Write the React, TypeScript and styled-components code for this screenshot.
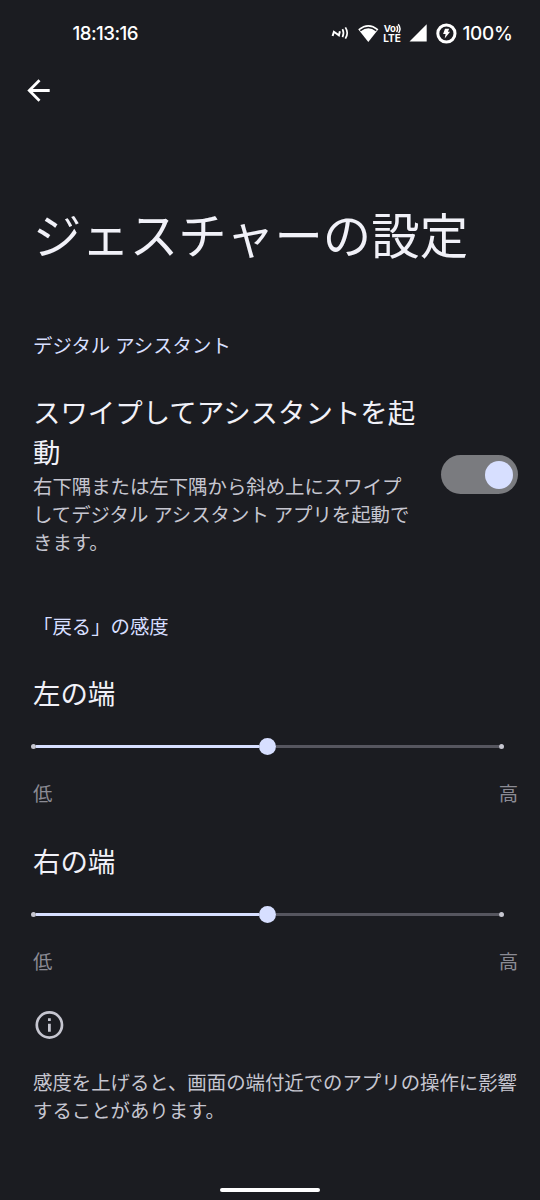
import React from "react";
import styled, { createGlobalStyle } from "styled-components";

const Global = createGlobalStyle`
  html, body { margin: 0; padding: 0; background: #1b1c21; }
  *, *::before, *::after { box-sizing: border-box; }
`;

const Screen = styled.main`
  width: 540px;
  height: 1200px;
  display: flex;
  flex-direction: column;
  background: #1b1c21;
  color: #f1f1f8;
  font-family: "Noto Sans CJK JP", sans-serif;
  overflow: hidden;
`;

const StatusBar = styled.header`
  display: flex;
  align-items: center;
  justify-content: space-between;
  height: 66px;
  padding: 0 27px 0 72.5px;
  color: #fff;
  font-family: Inter, sans-serif;
  font-weight: 500;
  font-size: 19px;
`;

const Clock = styled.time`
  font-size: 18.7px;
  letter-spacing: -0.55px;
`;

const StatusIcons = styled.div`
  display: flex;
  align-items: center;
  svg { display: block; }
`;

const Percent = styled.span`
  width: 50.5px;
  margin-left: 5.5px;
  white-space: nowrap;
  letter-spacing: -0.3px;
`;

const BackButton = styled.button`
  display: flex;
  width: 30px;
  height: 30px;
  margin: 9px 0 0 22.5px;
  padding: 0;
  border: 0;
  background: none;
  color: #fff;
`;

const Title = styled.h1`
  margin: 93px 0 0 33px;
  font-size: 48.4px;
  font-weight: 400;
  line-height: 70px;
  white-space: nowrap;
`;

const SectionTitle = styled.h2<{ $gap: number }>`
  margin: ${(p) => p.$gap}px 0 0 33px;
  font-size: 19.4px;
  font-weight: 400;
  line-height: 28px;
  word-spacing: 0.7px;
  color: #d7dfff;
`;

const Preference = styled.section`
  display: flex;
  align-items: center;
  justify-content: space-between;
  margin-top: 32px;
  padding: 0 22px 0 33px;
`;

const PreferenceText = styled.div`
  width: 386px;
`;

const Label = styled.h3`
  margin: 0;
  font-size: 27.45px;
  font-weight: 400;
  line-height: 40px;
  white-space: nowrap;
`;

const Summary = styled.p`
  margin: 1px 0 0;
  font-size: 19.4px;
  line-height: 28px;
  word-spacing: 0.5px;
  color: #c6c6d0;
  white-space: nowrap;
`;

const Switch = styled.button`
  display: flex;
  align-items: center;
  justify-content: flex-end;
  width: 77px;
  height: 39px;
  margin-top: 2px;
  padding: 0 5px;
  border: 0;
  border-radius: 20px;
  background: #7a7b7f;
`;

const SwitchThumb = styled.span`
  width: 28px;
  height: 28px;
  border-radius: 50%;
  background: #d7dfff;
`;

const SliderGroup = styled.section<{ $gap: number }>`
  height: 134px;
  margin-top: ${(p) => p.$gap}px;
  padding: 0 22px 0 33px;
`;

const Slider = styled.div`
  display: flex;
  align-items: center;
  width: 473px;
  height: 17px;
  margin: 26px 0 24px -2.5px;
`;

const Tick = styled.span`
  width: 5px;
  height: 5px;
  border-radius: 50%;
  background: #c6c6d0;
`;

const Track = styled.span<{ $active?: boolean }>`
  flex: 1;
  height: 3px;
  background: ${(p) => (p.$active ? "#d7dfff" : "#56565f")};
`;

const Thumb = styled.span`
  width: 17px;
  height: 17px;
  border-radius: 50%;
  background: #d7dfff;
`;

const Range = styled.div`
  display: flex;
  justify-content: space-between;
  font-size: 19.36px;
  line-height: 28px;
  color: #8b8b94;
`;

const Footer = styled.footer`
  display: flex;
  flex-direction: column;
  margin-top: 35px;
  padding: 0 22px 0 33px;
  svg { display: block; }
`;

const FooterText = styled.p`
  margin: 27px 0 0;
  font-size: 19.4px;
  line-height: 28px;
  color: #c6c6d0;
  white-space: nowrap;
`;

const HomeBar = styled.div`
  width: 100px;
  height: 4px;
  margin: auto auto 8px;
  border-radius: 2px;
  background: #fff;
`;

const StatusGlyphs = () => (
  <svg width="126" height="26" viewBox="331 20 126 26" fill="none">
    <path d="M332.600 36l1.300-4.200 5 3.600 1-4.200" stroke="#fff" strokeWidth="2" />
    <path d="M342.500 29.200q2 4 0 8M345.400 27.400q3.600 5.600 0 11.200" stroke="#fff" strokeWidth="1.700" />
    <path d="M358.200 29.200q10.200-8.600 20.200 0L368.300 42z" fill="#fff" />
    <path d="M360.300 30.700q8-6.200 16 0" stroke="#1b1c21" strokeWidth="1.500" />
    <g fill="#fff" fontFamily="Inter, sans-serif" fontWeight="700">
      <text x="383.800" y="32.200" fontSize="9.600" textLength="12">Vo</text>
      <text x="383.300" y="41.900" fontSize="10.800" textLength="17.500" lengthAdjust="spacingAndGlyphs">LTE</text>
    </g>
    <path d="M396.800 25.800q1.800 3.200-.2 6.400M398.200 24.200q3.400 4.400.4 8.800" stroke="#fff" strokeWidth="1.400" />
    <path d="M426.700 24.300v17.200h-17.200z" fill="#fff" />
    <circle cx="446.400" cy="33.500" r="8.600" stroke="#fff" strokeWidth="3" />
    <path d="M445 28.800h4.200l-1.300 3h2.200l-5.400 6.600.9-4.300h-2.500z" fill="#fff" />
  </svg>
);

const BackArrow = () => (
  <svg width="30" height="30" viewBox="0 0 30 30" fill="none" stroke="currentColor" strokeWidth="2.800">
    <path d="M26.700 15.500H6.500M16.500 5.300L6.300 15.500l10.200 10.200" />
  </svg>
);

const InfoIcon = () => (
  <svg width="32" height="32" viewBox="0 0 32 32" fill="none">
    <circle cx="16.400" cy="16" r="12.600" stroke="#c6c6d0" strokeWidth="2.700" />
    <path d="M15 14.700h2.800v8H15zM15 9.300h2.800v2.800H15z" fill="#c6c6d0" />
  </svg>
);

const EdgeSlider = ({ label, gap }: { label: string; gap: number }) => (
  <SliderGroup $gap={gap}>
    <Label>{label}</Label>
    <Slider role="slider" aria-label={label} aria-valuemin={0} aria-valuemax={2} aria-valuenow={1}>
      <Tick />
      <Track $active />
      <Thumb />
      <Track />
      <Tick />
    </Slider>
    <Range>
      <span>低</span>
      <span>高</span>
    </Range>
  </SliderGroup>
);

export default function App() {
  return (
    <>
      <Global />
      <Screen lang="ja">
        <StatusBar>
          <Clock>18:13:16</Clock>
          <StatusIcons>
            <StatusGlyphs />
            <Percent>100%</Percent>
          </StatusIcons>
        </StatusBar>
        <BackButton aria-label="戻る">
          <BackArrow />
        </BackButton>
        <Title>ジェスチャーの設定</Title>
        <SectionTitle $gap={63}>デジタル アシスタント</SectionTitle>
        <Preference>
          <PreferenceText>
            <Label>
              スワイプしてアシスタントを起
              <br />動
            </Label>
            <Summary>
              右下隅または左下隅から斜め上にスワイプ
              <br />
              してデジタル アシスタント アプリを起動で
              <br />
              きます。
            </Summary>
          </PreferenceText>
          <Switch role="switch" aria-checked="true" aria-label="スワイプしてアシスタントを起動">
            <SwitchThumb />
          </Switch>
        </Preference>
        <SectionTitle $gap={56}>「戻る」の感度</SectionTitle>
        <EdgeSlider label="左の端" gap={32} />
        <EdgeSlider label="右の端" gap={33.5} />
        <Footer>
          <InfoIcon />
          <FooterText>
            感度を上げると、画面の端付近でのアプリの操作に影響
            <br />
            することがあります。
          </FooterText>
        </Footer>
        <HomeBar />
      </Screen>
    </>
  );
}
